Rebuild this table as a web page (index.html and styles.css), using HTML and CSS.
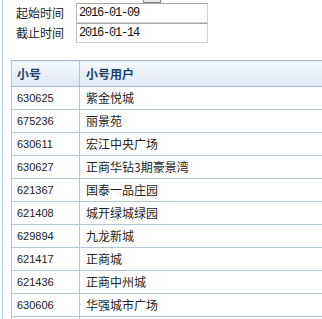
FILE: index.html
```html
<!DOCTYPE html>
<html>
<head>
<meta charset="utf-8">
<link rel="stylesheet" href="styles.css">
</head>
<body>
<div class="page">
  <div class="toprow"><div class="btn"></div></div>
  <div class="form">
    <div class="row"><span class="label">起始时间</span><span class="input">2016-01-09</span></div>
    <div class="row"><span class="label">截止时间</span><span class="input">2016-01-14</span></div>
  </div>
  <div class="gridwrap">
  <table class="grid">
    <thead>
      <tr><th class="c1">小号</th><th class="c2">小号用户</th></tr>
    </thead>
    <tbody>
      <tr><td class="num">630625</td><td>紫金悦城</td></tr>
      <tr><td class="num">675236</td><td>丽景苑</td></tr>
      <tr><td class="num">630611</td><td>宏江中央广场</td></tr>
      <tr><td class="num">630627</td><td>正商华钻3期豪景湾</td></tr>
      <tr><td class="num">621367</td><td>国泰一品庄园</td></tr>
      <tr><td class="num">621408</td><td>城开绿城绿园</td></tr>
      <tr><td class="num">629894</td><td>九龙新城</td></tr>
      <tr><td class="num">621417</td><td>正商城</td></tr>
      <tr><td class="num">621436</td><td>正商中州城</td></tr>
      <tr><td class="num">630606</td><td>华强城市广场</td></tr>
      <tr><td class="num"></td><td></td></tr>
    </tbody>
  </table>
  </div>
</div>
</body>
</html>
```
FILE: styles.css
```css
html, body {
  margin: 0;
  padding: 0;
  background: #ffffff;
  overflow: hidden;
  height: 319px;
}
body {
  font-family: "Liberation Sans", "Noto Sans CJK SC", sans-serif;
  font-size: 12px;
  color: #222;
}
.page {
  margin-left: 2px;
  border-left: 1px solid #b4cde6;
  height: 319px;
  box-sizing: border-box;
  overflow: hidden;
}
.toprow {
  height: 3px;
  overflow: hidden;
}
.btn {
  margin-left: 140px;
  margin-top: -18px;
  width: 16px;
  height: 19px;
  border: 1px solid #8a8a8a;
  background: #e8e8e8;
}
.form {
  display: flex;
  flex-direction: column;
}
.row {
  display: flex;
  align-items: center;
  height: 20px;
}
.label {
  width: 60px;
  padding-left: 13px;
  font-family: "Noto Sans CJK SC", sans-serif;
  font-size: 12px;
  line-height: 20px;
  color: #222;
}
.input {
  width: 128px;
  height: 18px;
  border: 1px solid #d0d0d0;
  border-top-color: #a8a8a8;
  border-left-color: #bcbcbc;
  padding-left: 2px;
  font-family: "Liberation Mono", monospace;
  font-size: 12px;
  letter-spacing: -1.2px;
  line-height: 18px;
  color: #111;
  background: #fff;
}
.gridwrap {
  margin-top: 17px;
  margin-left: 8px;
  overflow: hidden;
}
.grid {
  width: 330px;
  border-collapse: collapse;
  table-layout: fixed;
}
.grid th {
  height: 25px;
  padding: 0;
  text-align: left;
  font-family: "Noto Sans CJK SC", sans-serif;
  font-weight: bold;
  font-size: 12px;
  color: #1e3e6c;
  background: linear-gradient(#f4f9fe, #dce9f6);
  border-top: 1px solid #a7bccf;
  border-bottom: 1px solid #9dbee0;
  border-left: 1px solid #b3c8dc;
  border-right: 1px solid #b3c8dc;
}
.grid .c1 {
  width: 62px;
  padding-left: 5px;
}
.grid .c2 {
  padding-left: 6px;
}
.grid td {
  height: 22px;
  padding: 0 0 0 6px;
  border: 1px solid #b3c6d8;
  font-family: "Noto Sans CJK SC", sans-serif;
  font-size: 12px;
  color: #222;
  background: #fff;
  white-space: nowrap;
  line-height: 16px;
}
.grid td.num {
  padding-left: 5px;
  font-family: "Liberation Sans", sans-serif;
  font-size: 11px;
  color: #222;
}
```
